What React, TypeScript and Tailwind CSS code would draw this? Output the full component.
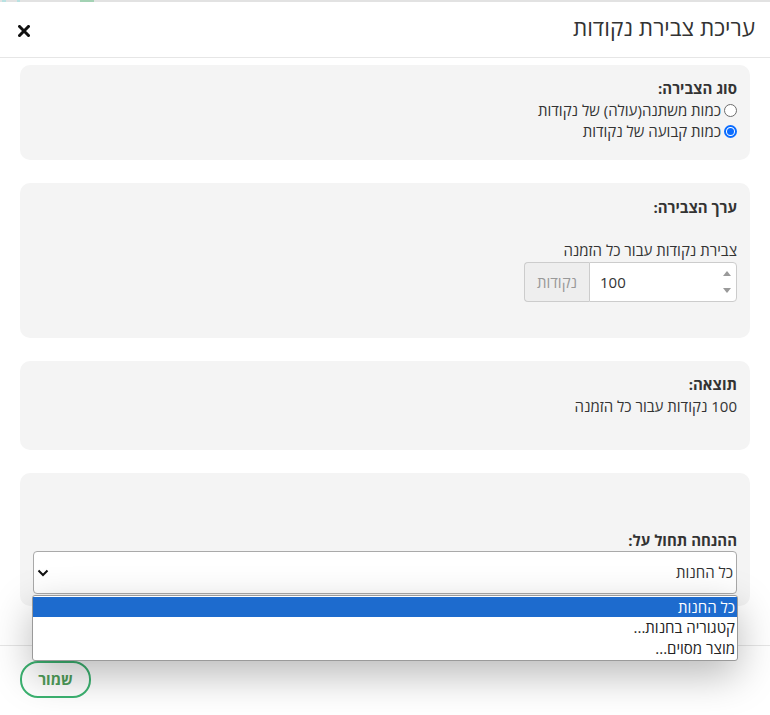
import { useState } from "react";

const options = ["כל החנות", "קטגוריה בחנות...", "מוצר מסוים..."];

function Radio({ checked }: { checked: boolean }) {
  return checked ? (
    <span className="w-[13px] h-[13px] rounded-full border-2 border-[#0a6cff] bg-white flex items-center justify-center shrink-0">
      <span className="w-[7px] h-[7px] rounded-full bg-[#0a6cff]" />
    </span>
  ) : (
    <span className="w-[13px] h-[13px] rounded-full border border-[#6d6d6d] bg-white shrink-0" />
  );
}

export default function App() {
  const [kind, setKind] = useState(1);

  return (
    <div
      dir="rtl"
      className="relative w-[770px] h-[715px] overflow-hidden bg-white text-[15px] text-[#333] font-['Open_Sans','Noto_Sans','DejaVu_Sans',sans-serif]"
    >
      {/* page peeking behind the modal */}
      <div className="h-[2px] bg-[#e2e2e2] relative" dir="ltr">
        <span className="absolute left-[2px] top-0 w-[4px] h-[2px] bg-[#b8e2e2]" />
        <span className="absolute left-[17px] top-0 w-[3px] h-[2px] bg-[#b8e2e2]" />
        <span className="absolute left-[80px] top-0 w-[14px] h-[2px] bg-[#a3d2b4]" />
      </div>

      {/* Header */}
      <header className="h-[56px] flex items-center justify-between pr-[15px] pl-[18px] border-b border-[#e6e6e6]">
        <h4 className="text-[22.5px] leading-none font-normal text-[#333] -mt-[2px]">עריכת צבירת נקודות</h4>
        <button className="w-[12px] h-[12px] mt-[2px] flex items-center justify-center">
          <svg width="12" height="12" viewBox="0 0 12 12">
            <path d="M1.5 1.5 L10.5 10.5 M10.5 1.5 L1.5 10.5" stroke="#111" strokeWidth="3" strokeLinecap="square" />
          </svg>
        </button>
      </header>

      {/* Body */}
      <div className="px-[20px] pt-[7px] pb-[39px] flex flex-col gap-[23px]">
        <section className="bg-[#f4f4f4] rounded-[10px] px-[13px] pt-[13px] pb-[18px]">
          <div className="font-bold leading-[20px] mb-[2px]">סוג הצבירה:</div>
          <label className="flex items-center gap-[3px] h-[21px]" onClick={() => setKind(0)}>
            <Radio checked={kind === 0} />
            <span>כמות משתנה(עולה) של נקודות</span>
          </label>
          <label className="flex items-center gap-[3px] h-[21px]" onClick={() => setKind(1)}>
            <Radio checked={kind === 1} />
            <span>כמות קבועה של נקודות</span>
          </label>
        </section>

        <section className="bg-[#f4f4f4] rounded-[10px] px-[13px] pt-[14px] pb-[36px]">
          <div className="font-bold leading-[20px]">ערך הצבירה:</div>
          <div className="leading-[20px] mt-[23px]">צבירת נקודות עבור כל הזמנה</div>
          <div className="flex w-[213px] h-[40px] mt-[2px]">
            <div className="flex-1 flex items-center bg-white border border-[#ccc] rounded-r-[4px]" dir="ltr">
              <span className="flex-1 pl-[10px] text-[15px] text-[#333]">100</span>
              <span className="w-[19px] h-full flex flex-col items-center justify-between py-[8px]">
                <svg width="8" height="5" viewBox="0 0 8 5"><path d="M0 5 L4 0 L8 5 Z" fill="#9a9a9a" /></svg>
                <svg width="8" height="5" viewBox="0 0 8 5"><path d="M0 0 L4 5 L8 0 Z" fill="#9a9a9a" /></svg>
              </span>
            </div>
            <div className="w-[65px] flex items-center justify-center bg-[#eee] border border-r-0 border-[#ccc] rounded-l-[4px] text-[#999]">
              נקודות
            </div>
          </div>
        </section>

        <section className="bg-[#f4f4f4] rounded-[10px] px-[13px] pt-[13px] pb-[34px]">
          <div className="font-bold leading-[20px]">תוצאה:</div>
          <div className="leading-[20px] mt-[2px]">100 נקודות עבור כל הזמנה</div>
        </section>

        <section className="relative bg-[#f4f4f4] rounded-[10px] px-[13px] pt-[57px] pb-[12px]">
          <div className="font-bold leading-[20px]">ההנחה תחול על:</div>
          <div className="mt-[1px] h-[43px] flex items-center justify-between bg-white border border-[#a9a9a9] rounded-[4px] pr-[3px] pl-[3px]">
            <span className="text-[#333]">כל החנות</span>
            <svg width="12" height="8" viewBox="0 0 12 8">
              <path d="M1.5 1.5 L6 6 L10.5 1.5" stroke="#111" strokeWidth="2" fill="none" />
            </svg>
          </div>

          {/* open list of the select */}
          <ul className="absolute z-10 right-[12px] left-[12px] top-[122px] bg-white border border-[#9a9a9a] rounded-[3px] py-[1px] shadow-[0_14px_40px_rgba(0,0,0,0.28)]">
            {options.map((o, i) => (
              <li
                key={o}
                className={
                  i === 0
                    ? "h-[20px] leading-[20px] pr-[2px] bg-[#1d6bce] text-white"
                    : "h-[21px] leading-[21px] pr-[2px] text-[#222]"
                }
              >
                {o}
              </li>
            ))}
          </ul>
        </section>
      </div>

      {/* Footer */}
      <footer className="border-t border-[#e6e6e6] px-[20px] pt-[15px]" dir="ltr">
        <button className="w-[71px] h-[37px] rounded-[18px] border-2 border-[#3cb371] text-[#4f9e5a] font-bold text-[15px]">
          שמור
        </button>
      </footer>
    </div>
  );
}
